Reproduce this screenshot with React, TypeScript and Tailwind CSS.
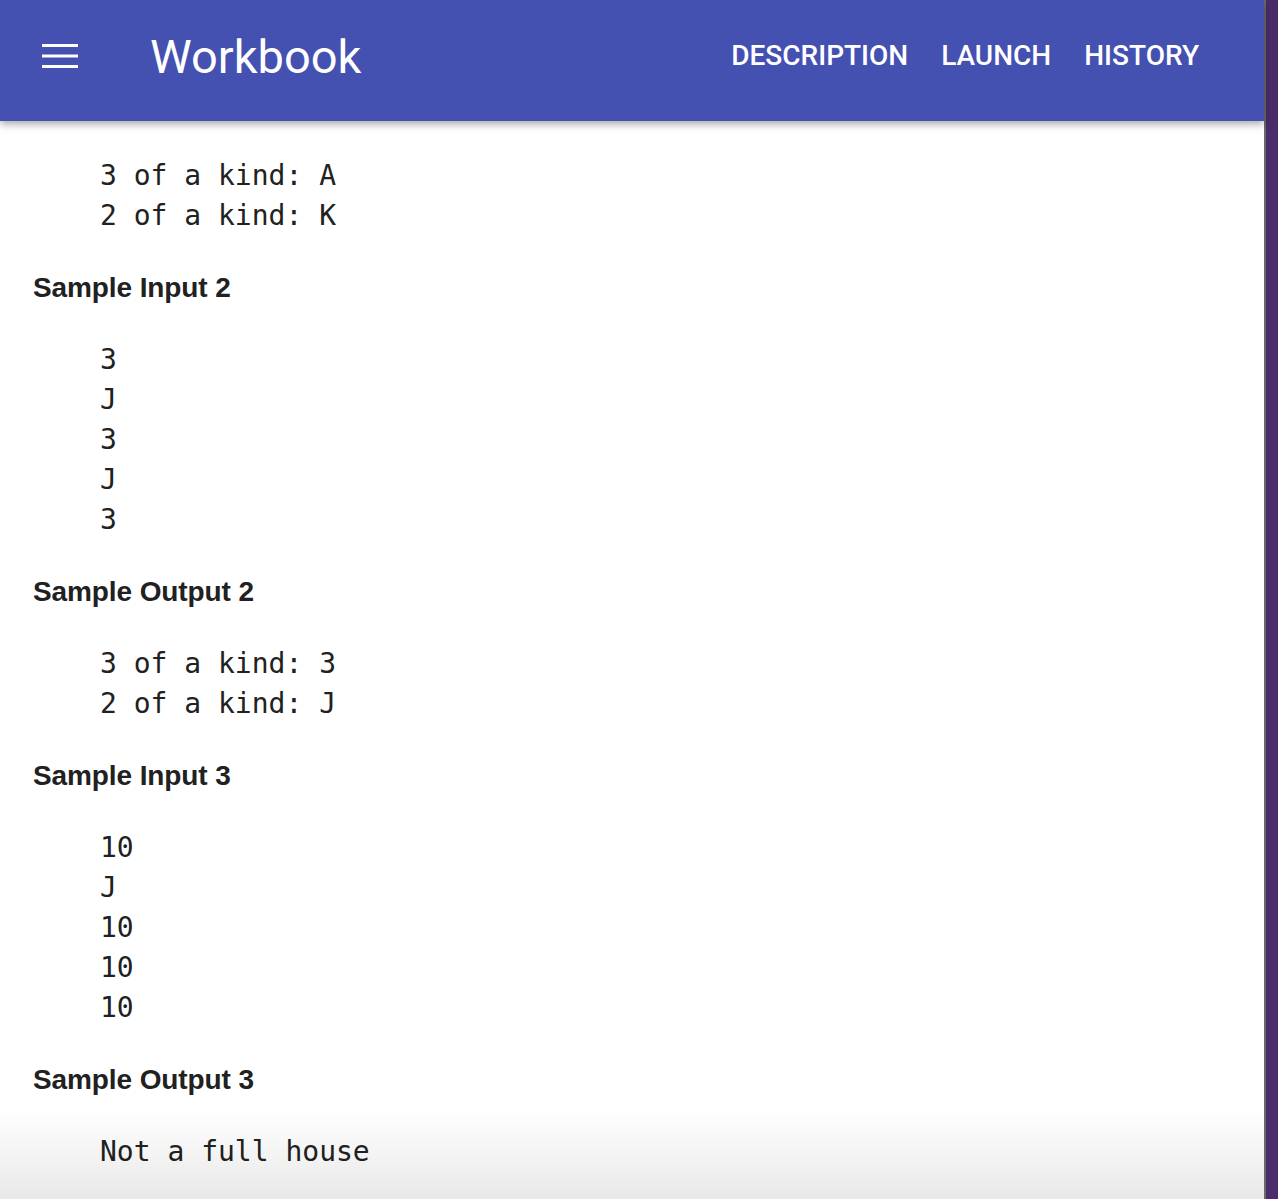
import React from "react";

type Block = { heading?: string; lines: string[] };

const BLOCKS: Block[] = [
  { lines: ["3 of a kind: A", "2 of a kind: K"] },
  { heading: "Sample Input 2", lines: ["3", "J", "3", "J", "3"] },
  { heading: "Sample Output 2", lines: ["3 of a kind: 3", "2 of a kind: J"] },
  { heading: "Sample Input 3", lines: ["10", "J", "10", "10", "10"] },
  { heading: "Sample Output 3", lines: ["Not a full house"] },
];

const NAV = ["DESCRIPTION", "LAUNCH", "HISTORY"];

function MenuIcon() {
  return (
    <svg width="36" height="26" viewBox="0 0 36 26" className="block">
      <rect x="0" y="1" width="36" height="3" fill="#ffffff" />
      <rect x="0" y="11.5" width="36" height="3" fill="#ffffff" />
      <rect x="0" y="22" width="36" height="3" fill="#ffffff" />
    </svg>
  );
}

export default function App() {
  return (
    <div className="w-[1278px] h-[1199px] flex overflow-hidden relative bg-[#4b2c6b]">
      <div className="w-[1264px] h-full bg-white flex flex-col relative">
        {/* App bar */}
        <header className="relative z-10 h-[121px] shrink-0 bg-[#4551b1] shadow-[0_3px_8px_rgba(0,0,0,0.35)] flex items-center pb-[9px] pl-[42px] pr-[65px]">
          <MenuIcon />
          <h1 className="ml-[72px] text-white text-[47px] leading-none font-['Roboto',sans-serif] font-normal">Workbook</h1>
          <nav className="ml-auto flex items-center gap-[33px]">
            {NAV.map((item) => (
              <span key={item} className="text-white text-[28px] leading-none font-medium font-['Roboto',sans-serif]">
                {item}
              </span>
            ))}
          </nav>
        </header>

        {/* Problem samples */}
        <div className="flex flex-col gap-9 pt-[35px] pl-[33px] text-[#212121]">
          {BLOCKS.map((block, i) => (
            <React.Fragment key={i}>
              {block.heading && (
                <h3 className="h-8 flex items-center text-[28px] font-bold tracking-[-0.1px] font-['Liberation_Sans',Arial,sans-serif]">
                  {block.heading}
                </h3>
              )}
              <pre className="pl-[67px] text-[28px] leading-10 font-['DejaVu_Sans_Mono',monospace]">
                {block.lines.join("\n")}
              </pre>
            </React.Fragment>
          ))}
        </div>

        {/* bottom fade */}
        <div className="absolute left-0 right-0 bottom-0 h-[90px] bg-gradient-to-b from-transparent to-black/[0.09] pointer-events-none"></div>
      </div>
      <div className="w-[2px] h-full bg-[#6b6b6b]"></div>
      <div className="flex-1 h-full bg-[#4b2c6b] rounded-br-[6px]"></div>
    </div>
  );
}
